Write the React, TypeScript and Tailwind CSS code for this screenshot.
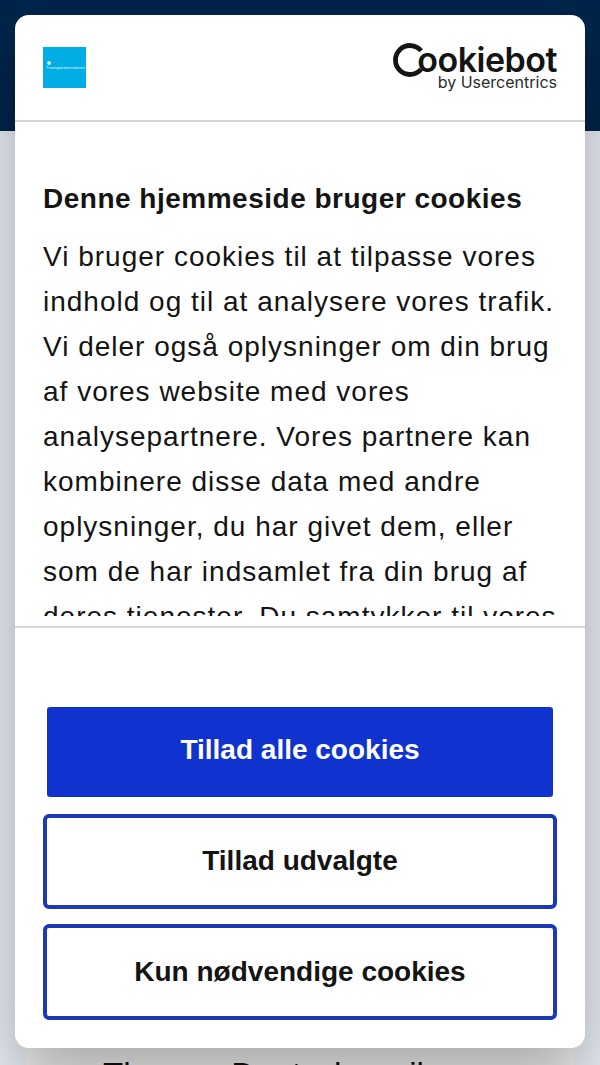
const App = () => {
  return (
    <div className="relative h-[1065px] w-[600px] overflow-hidden bg-[#e8edf4] font-['Liberation_Sans',sans-serif]">
      <div className="h-[131px] bg-[#00244a]" />
      <div className="mx-[27px] mt-[917px] flex h-[17px] overflow-hidden bg-[#f0f0f0] pl-[76px] pt-[10px]">
        <p className="whitespace-nowrap text-[33px] leading-[34px] text-[#111]">Thomas Deutsch-mail</p>
      </div>

      <div className="absolute left-[15px] top-[15px] flex h-[1033px] w-[570px] flex-col overflow-hidden rounded-[14px] bg-white shadow-[0_32px_68px_rgba(0,0,0,0.3)]">
        <header className="flex h-[107px] shrink-0 items-start justify-between border-b-2 border-[#d6d6d6] px-[28px] pt-[32px]">
          <div className="flex h-[41px] w-[43px] flex-col bg-[#00ade4] pl-[3px] pt-[14px] text-white">
            <span className="ml-[1px] h-[4px] w-[4px] rounded-full bg-white/80" />
            <span className="whitespace-nowrap text-[4.4px] leading-[5px] opacity-90">Transportministeriet</span>
          </div>
          <div className="-mt-[4px] flex flex-col items-end">
            <div className="flex h-[34px] items-center">
              <svg width="32" height="34" viewBox="0 0 32 34" fill="none">
                <path d="M28.1 7.7A14.5 14.5 0 1 0 28.1 26.3" stroke="#141414" strokeWidth="4.8" />
              </svg>
              <span className="-ml-[8px] text-[34px] font-semibold leading-[34px] tracking-[-0.5px] text-[#141414] font-['Inter',sans-serif]">ookiebot</span>
            </div>
            <span className="-mt-[4px] text-[16px] leading-[18px] text-[#2b2b2b] font-['Inter',sans-serif]">by Usercentrics</span>
          </div>
        </header>

        <section className="h-[504px] shrink-0 px-[28px] pt-[61px]">
          <div className="h-[433px] overflow-hidden">
            <h1 className="text-[28px] font-bold leading-[32px] tracking-[0.5px] text-[#141414]">Denne hjemmeside bruger cookies</h1>
            <p className="mt-[19px] text-[28px] leading-[45px] tracking-[1px] text-[#141414]">
              Vi bruger cookies til at tilpasse vores indhold og til at analysere vores trafik. Vi deler også oplysninger om din brug af vores website med vores analysepartnere. Vores partnere kan kombinere disse data med andre oplysninger, du har givet dem, eller som de har indsamlet fra din brug af deres tjenester. Du samtykker til vores
            </p>
          </div>
        </section>

        <footer className="flex flex-1 flex-col border-t-2 border-[#d6d6d6] px-[28px] pt-[79px]">
          <button className="mx-[4px] h-[90px] rounded-[3px] bg-[#1032cf] pb-[4px] text-[28px] font-bold text-white">Tillad alle cookies</button>
          <button className="mt-[17px] h-[95px] rounded-[6px] border-[4px] border-[#1d39b8] pb-[2px] text-[28px] font-bold text-[#141414]">Tillad udvalgte</button>
          <button className="mt-[15px] h-[96px] rounded-[6px] border-[4px] border-[#1d39b8] text-[28px] font-bold text-[#141414]">Kun nødvendige cookies</button>
        </footer>
      </div>
    </div>
  );
};

export default App;
